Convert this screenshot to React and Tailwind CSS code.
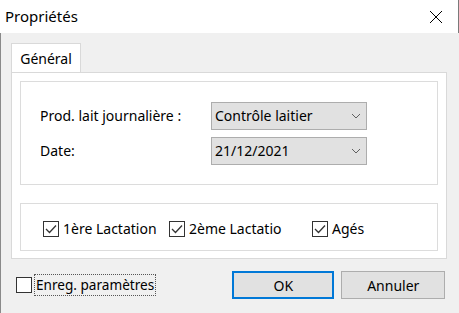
import React from "react";

const font = { fontFamily: '"Noto Sans", "Open Sans", sans-serif' };

function Chevron() {
  return (
    <svg width="10" height="6" viewBox="0 0 10 6" className="text-[#606060]">
      <path d="M1 1 L5 5 L9 1" fill="none" stroke="currentColor" strokeWidth="1" />
    </svg>
  );
}

function Combo({ value }) {
  return (
    <div className="flex h-[28px] w-[156px] items-center justify-between border border-[#adadad] bg-[#e1e1e1] pl-[3px] pr-[5px] text-[14px] text-black">
      <span>{value}</span>
      <Chevron />
    </div>
  );
}

function Check({ checked = true }) {
  return (
    <span className="flex h-[16px] w-[16px] shrink-0 items-center justify-center border-[1.5px] border-[#333] bg-white">
      {checked && (
        <svg width="12" height="10" viewBox="0 0 12 10">
          <path d="M1 5 L4.5 8.5 L11 1.5" fill="none" stroke="#333" strokeWidth="1.3" />
        </svg>
      )}
    </span>
  );
}

function CheckItem({ label, className = "" }) {
  return (
    <div className={`flex items-center gap-[4px] ${className}`}>
      <Check />
      <span className="text-[14px] text-black">{label}</span>
    </div>
  );
}

export default function App() {
  return (
    <div style={font} className="flex h-[313px] w-[459px] flex-col overflow-hidden bg-[#f0f0f0]">
      {/* title bar */}
      <div className="flex h-[33px] shrink-0 items-center justify-between border-r border-[#7a7a7a] bg-white pl-[5px] pr-[15px]">
        <span className="text-[15px] text-black">Propriétés</span>
        <svg width="14" height="14" viewBox="0 0 14 14">
          <path d="M1 1 L13 13 M13 1 L1 13" stroke="#000" strokeWidth="1" />
        </svg>
      </div>

      <div className="flex flex-1 flex-col border-l border-[#8a8a8a]">
        {/* tab */}
        <div className="ml-[10px] mt-[10px] flex h-[29px] w-[70px] items-center justify-center border border-b-0 border-[#d9d9d9] bg-white text-[14px] text-black">
          Général
        </div>

        {/* tab panel */}
        <div className="ml-[10px] flex h-[187px] w-[436px] flex-col border border-[#d9d9d9] bg-white px-[8px] pt-[8px]">
          <div className="flex h-[104px] flex-col justify-center gap-[7px] border border-[#dcdcdc] pl-[19px]">
            <div className="flex items-center">
              <span className="w-[171px] text-[14px] text-black">Prod. lait journalière :</span>
              <Combo value="Contrôle laitier" />
            </div>
            <div className="flex items-center">
              <span className="w-[171px] text-[14px] text-black">Date:</span>
              <Combo value="21/12/2021" />
            </div>
          </div>

          <div className="mt-[18px] flex h-[48px] items-center border border-[#dcdcdc] pl-[22px] pt-[3px]">
            <CheckItem label="1ère Lactation" className="w-[126px]" />
            <CheckItem label="2ème Lactatio" className="w-[143px]" />
            <CheckItem label="Agés" />
          </div>
        </div>

        {/* bottom row */}
        <div className="mt-[12px] flex items-center pl-[15px]">
          <div className="flex items-center gap-[2px]">
            <Check checked={false} />
            <span className="border border-dotted border-[#555] px-[1px] py-[1px] text-[13.6px] leading-[18px] text-black">
              Enreg. paramètres
            </span>
          </div>
          <button className="ml-[76px] h-[28px] w-[102px] border-2 border-[#0078d7] bg-[#e1e1e1] text-[14px] text-black">
            OK
          </button>
          <button className="ml-[7px] h-[28px] w-[104px] border border-[#adadad] bg-[#e1e1e1] text-[14px] text-black">
            Annuler
          </button>
        </div>
      </div>
    </div>
  );
}
